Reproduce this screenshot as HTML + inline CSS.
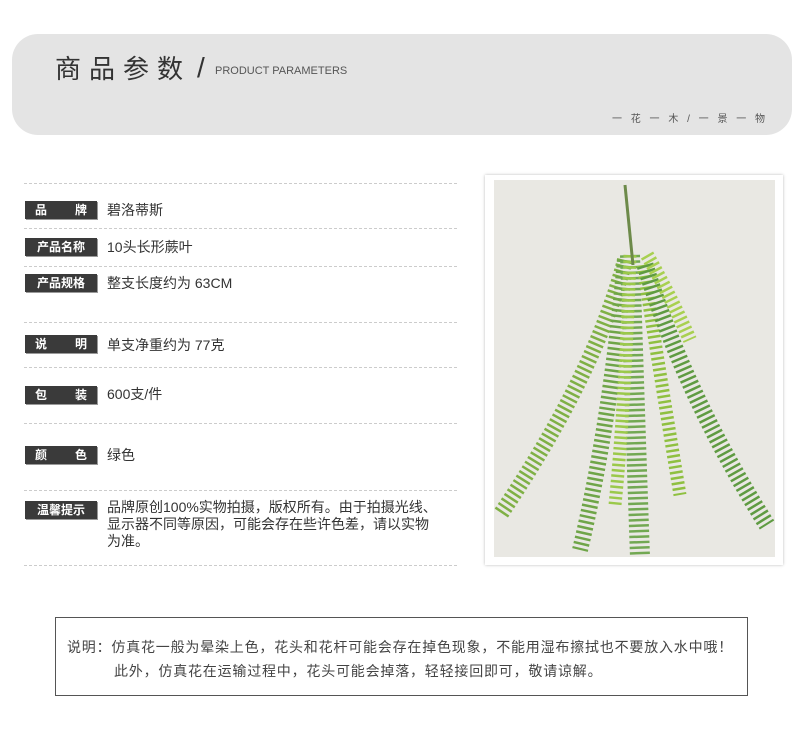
<!DOCTYPE html><html><head><meta charset="utf-8"><style>
*{margin:0;padding:0;box-sizing:border-box}
body{width:800px;height:730px;background:#fff;position:relative;overflow:hidden;font-family:"Liberation Sans","Noto Sans CJK SC",sans-serif;color:#333}
.hd{position:absolute;left:12px;top:34px;width:780px;height:101px;background:#e4e4e4;border-radius:26px}
.t{position:absolute;left:55px;top:49px;font-size:26px;letter-spacing:8px;color:#333}
.sl{position:absolute;left:197px;top:52px;font-size:28px;color:#333;font-weight:300}
.en{position:absolute;left:215px;top:65px;font-size:11px;color:#555}
.sub{position:absolute;left:612px;top:110px;font-size:10px;color:#555;letter-spacing:3px}
.dl{position:absolute;left:24px;width:433px;border-top:1px dashed #ccc}
.lb{position:absolute;left:25px;width:72px;height:18px;background:#3a3a3a;color:#fff;font-size:12px;font-weight:bold;line-height:18px;text-align:center;box-shadow:1px 1px 0 #999}
.lb.s{display:flex;justify-content:space-between;padding:0 10px}
.v{position:absolute;left:107px;font-size:14px;color:#333;line-height:18px}
.ph{position:absolute;left:485px;top:175px;width:298px;height:390px;background:#fff;box-shadow:0 0 3px #bbb}
.note{position:absolute;left:55px;top:617px;width:693px;height:79px;border:1px solid #555;font-size:14px;color:#444;letter-spacing:0.8px}
</style></head><body>
<div class="hd"></div>
<div class="t">商品参数</div><div class="sl">/</div><div class="en">PRODUCT PARAMETERS</div>
<div class="sub">一 花 一 木 / 一 景 一 物</div>
<div class="dl" style="top:183px"></div><div class="dl" style="top:228px"></div><div class="dl" style="top:266px"></div><div class="dl" style="top:322px"></div><div class="dl" style="top:367px"></div><div class="dl" style="top:423px"></div><div class="dl" style="top:490px"></div><div class="dl" style="top:565px"></div>
<div class="lb s" style="top:201px"><span>品</span><span>牌</span></div><div class="v" style="top:201px">碧洛蒂斯</div>
<div class="lb" style="top:238px">产品名称</div><div class="v" style="top:238px">10头长形蕨叶</div>
<div class="lb" style="top:274px">产品规格</div><div class="v" style="top:274px">整支长度约为 63CM</div>
<div class="lb s" style="top:335px"><span>说</span><span>明</span></div><div class="v" style="top:336px">单支净重约为 77克</div>
<div class="lb s" style="top:386px"><span>包</span><span>装</span></div><div class="v" style="top:385px">600支/件</div>
<div class="lb s" style="top:446px"><span>颜</span><span>色</span></div><div class="v" style="top:446px">绿色</div>
<div class="lb" style="top:501px">温馨提示</div><div class="v" style="top:499px;width:370px;line-height:17px;white-space:nowrap">品牌原创100%实物拍摄，版权所有。由于拍摄光线、<br>显示器不同等原因，可能会存在些许色差，请以实物<br>为准。</div>
<div class="ph"><svg width="298" height="390" style="position:absolute;left:0;top:0">
<rect x="9" y="5" width="281" height="377" fill="#e9e8e3"/>
<g fill="none" stroke-dasharray="2.5 3">
<path d="M140 85 Q110 200 15 340" stroke="#7fb045" stroke-width="16"/>
<path d="M140 85 Q125 250 95 375" stroke="#6fa548" stroke-width="16"/>
<path d="M145 80 Q150 240 155 382" stroke="#72a852" stroke-width="20"/>
<path d="M158 90 Q175 200 195 320" stroke="#8fc040" stroke-width="13"/>
<path d="M160 90 Q200 220 282 350" stroke="#5f9b42" stroke-width="17"/>
<path d="M162 80 Q185 120 205 165" stroke="#a8d050" stroke-width="14"/>
<path d="M145 80 Q140 230 130 330" stroke="#9bc94a" stroke-width="13"/>
</g>
<path d="M140 10 Q145 60 148 90" stroke="#6d8a4a" stroke-width="3" fill="none"/>
</svg></div>
<div class="note"><div style="position:absolute;left:11px;top:19px">说明：仿真花一般为晕染上色，花头和花杆可能会存在掉色现象，不能用湿布擦拭也不要放入水中哦！</div><div style="position:absolute;left:58px;top:43px">此外，仿真花在运输过程中，花头可能会掉落，轻轻接回即可，敬请谅解。</div></div>
</body></html>
